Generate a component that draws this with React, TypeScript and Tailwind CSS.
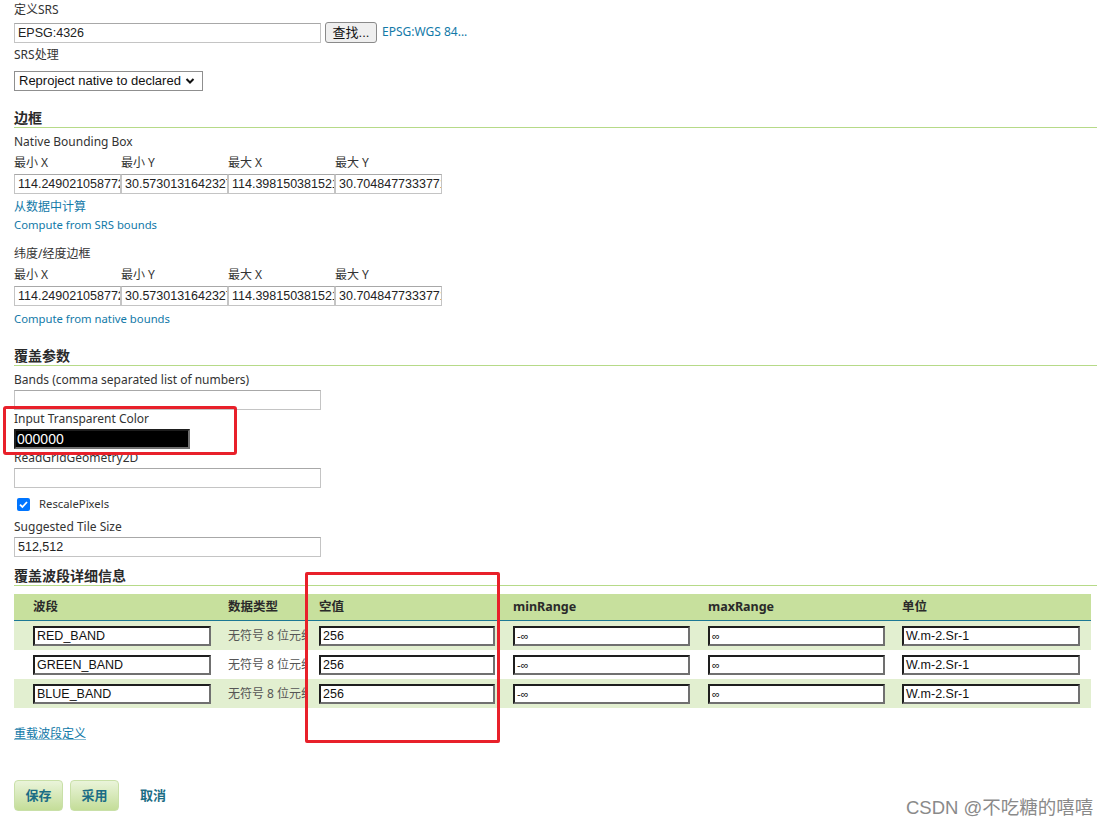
import React from "react";

const font = { fontFamily: '"Noto Sans", "Noto Sans CJK SC", sans-serif' };
const arial = { fontFamily: '"Liberation Sans", "Noto Sans CJK SC", sans-serif' };

function Label({ children, className = "" }: { children: React.ReactNode; className?: string }) {
  return <div className={"h-4 leading-4 text-[12px] text-[#333] whitespace-nowrap " + className}>{children}</div>;
}

function Heading({ children, className = "" }: { children: React.ReactNode; className?: string }) {
  return (
    <div className={"w-[1083px] border-b border-[#b6da88] h-[18px] leading-4 text-[14px] font-bold text-[#2a2a2a] " + className}>
      {children}
    </div>
  );
}

function TextBox({ value = "", className = "" }: { value?: string; className?: string }) {
  return (
    <div
      className={"h-[20px] border border-[#c4c4c4] border-t-[#a8a8a8] bg-white px-[3px] leading-[18px] text-[12.5px] text-[#222] overflow-hidden whitespace-nowrap " + className}
      style={arial}
    >
      {value}
    </div>
  );
}

function BBox({ vals }: { vals: string[] }) {
  const labels = ["最小 X", "最小 Y", "最大 X", "最大 Y"];
  return (
    <div>
      <div className="flex">
        {labels.map((l) => (
          <div key={l} className="w-[107px] h-4 leading-4 text-[12px] text-[#333]">
            {l}
          </div>
        ))}
      </div>
      <div className="flex mt-[3px]">
        {vals.map((v, i) => (
          <TextBox key={i} value={v} className="w-[107px]" />
        ))}
      </div>
    </div>
  );
}

function CellInput({ value, w, small = false }: { value: string; w: number; small?: boolean }) {
  return (
    <div
      className={
        "h-[20px] bg-white border-2 border-t-[#1e1e1e] border-l-[#1e1e1e] border-b-[#707070] border-r-[#707070] pl-[2px] overflow-hidden whitespace-nowrap text-[#111] " +
        (small ? "text-[11px] leading-[16px]" : "text-[12.5px] leading-[16px]")
      }
      style={{ ...arial, width: w }}
    >
      {value}
    </div>
  );
}

const rows = [
  { name: "RED_BAND", bg: "bg-[#e2efd0]" },
  { name: "GREEN_BAND", bg: "bg-white" },
  { name: "BLUE_BAND", bg: "bg-[#e2efd0]" },
];

const linkCls = "h-4 leading-4 text-[#1279a8] whitespace-nowrap";

export default function App() {
  const bb = ["114.2490210587722", "30.57301316423277", "114.3981503815214", "30.70484773337711"];
  return (
    <div className="relative w-[1113px] h-[826px] bg-white overflow-hidden" style={font}>
      <div className="pl-[14px] pt-[2px]">
        <Label>定义SRS</Label>
        <div className="flex items-center mt-[3px] h-[22px]">
          <TextBox value="EPSG:4326" className="w-[307px] mt-[2px]" />
          <div
            className="ml-[4px] w-[52px] h-[21px] border border-[#8a8a8a] rounded-[3px] bg-[#efefef] text-[13px] leading-[19px] text-center text-[#111]"
            style={arial}
          >
            查找...
          </div>
          <span className="ml-[5px] text-[12px] text-[#1279a8]">EPSG:WGS 84...</span>
        </div>
        <Label className="mt-[4px]">SRS处理</Label>
        <div
          className="mt-[8px] w-[189px] h-[20px] border border-[#8f8f8f] flex items-center pl-[4px] text-[13px] text-[#111] whitespace-nowrap"
          style={arial}
        >
          <span>Reproject native to declared</span>
          <svg width="10" height="8" viewBox="0 0 10 8" className="ml-[4px]">
            <path d="M1.5 2 L5 5.5 L8.5 2" stroke="#111" strokeWidth="2" fill="none" />
          </svg>
        </div>

        <Heading className="mt-[19px]">边框</Heading>
        <Label className="mt-[6px] text-[11.3px]">Native Bounding Box</Label>
        <div className="mt-[5px]">
          <BBox vals={bb} />
        </div>
        <div className={"mt-[5px] text-[12px] " + linkCls}>从数据中计算</div>
        <div className={"mt-[2px] text-[11.3px] " + linkCls}>Compute from SRS bounds</div>
        <Label className="mt-[13px]">纬度/经度边框</Label>
        <div className="mt-[5px]">
          <BBox vals={bb} />
        </div>
        <div className={"mt-[5px] text-[11.3px] " + linkCls}>Compute from native bounds</div>

        <Heading className="mt-[21px]">覆盖参数</Heading>
        <Label className="mt-[6px] text-[11.3px]">Bands (comma separated list of numbers)</Label>
        <TextBox className="w-[307px] mt-[2px]" />
        <Label className="mt-[1px] text-[11.3px]">Input Transparent Color</Label>
        <div
          className="mt-[2px] w-[176px] h-[20px] bg-black border-2 border-t-[#1e1e1e] border-l-[#1e1e1e] border-b-[#707070] border-r-[#707070] pl-[1px] text-white text-[14px] leading-[16px]"
          style={arial}
        >
          000000
        </div>
        <Label className="mt-[1px] text-[11.3px]">ReadGridGeometry2D</Label>
        <TextBox className="w-[307px] mt-[2px]" />
        <div className="mt-[8px] h-4 flex items-center">
          <div className="ml-[3px] mt-[1px] w-[13px] h-[13px] rounded-[2px] bg-[#0075ff] flex items-center justify-center">
            <svg width="11" height="11" viewBox="0 0 11 11">
              <path d="M2 5.6 L4.4 8 L9 3" stroke="white" strokeWidth="1.8" fill="none" />
            </svg>
          </div>
          <span className="ml-[9px] text-[11.3px] text-[#333]">RescalePixels</span>
        </div>
        <Label className="mt-[7px] text-[11.3px]">Suggested Tile Size</Label>
        <TextBox value="512,512" className="w-[307px] mt-[2px]" />

        <Heading className="mt-[11px]">覆盖波段详细信息</Heading>

        <div className="mt-[8px] w-[1077px]">
          <div className="grid grid-cols-[200px_91px_195px_195px_194px_202px] h-[27px] bg-[#c7e09d] border-b border-[#1c7894] text-[12.5px] font-bold text-[#2a2a2a] items-center">
            <div className="pl-[19px]">波段</div>
            <div className="pl-[14px]">数据类型</div>
            <div className="pl-[14px]">空值</div>
            <div className="pl-[13px]">minRange</div>
            <div className="pl-[13px]">maxRange</div>
            <div className="pl-[13px]">单位</div>
          </div>
          {rows.map((r) => (
            <div
              key={r.name}
              className={"grid grid-cols-[200px_91px_195px_195px_194px_202px] h-[29px] items-center " + r.bg}
            >
              <div className="pl-[19px]">
                <CellInput value={r.name} w={178} />
              </div>
              <div className="pl-[14px] text-[12px] text-[#555] whitespace-nowrap overflow-hidden">无符号 8 位元组</div>
              <div className="pl-[14px]">
                <CellInput value="256" w={176} />
              </div>
              <div className="pl-[13px]">
                <CellInput value="-∞" w={177} small />
              </div>
              <div className="pl-[13px]">
                <CellInput value="∞" w={177} small />
              </div>
              <div className="pl-[13px]">
                <CellInput value="W.m-2.Sr-1" w={178} />
              </div>
            </div>
          ))}
        </div>

        <div className={"mt-[18px] text-[12px] underline decoration-[#1279a8]/50 " + linkCls}>重载波段定义</div>

        <div className="mt-[38px] flex items-center">
          <div className="w-[49px] h-[31px] rounded-[4px] border border-[#c9e0a8] bg-gradient-to-b from-[#eaf4da] to-[#c4dd98] text-[13px] font-bold text-[#1b6d85] flex items-center justify-center">
            保存
          </div>
          <div className="ml-[7px] w-[49px] h-[31px] rounded-[4px] border border-[#c9e0a8] bg-gradient-to-b from-[#eaf4da] to-[#c4dd98] text-[13px] font-bold text-[#1b6d85] flex items-center justify-center">
            采用
          </div>
          <div className="ml-[21px] text-[13px] font-bold text-[#1b6d85]">取消</div>
        </div>
      </div>

      <div className="absolute left-[3px] top-[406px] w-[234px] h-[49px] border-[3px] border-[#e8202a] rounded-[3px]" />
      <div className="absolute left-[305px] top-[572px] w-[195px] h-[171px] border-[3px] border-[#e8202a] rounded-[2px]" />

      <div className="absolute left-[906px] top-[794px] text-[18.5px] text-[#8a8a8a] whitespace-nowrap" style={arial}>
        CSDN @不吃糖的嘻嘻
      </div>
    </div>
  );
}
